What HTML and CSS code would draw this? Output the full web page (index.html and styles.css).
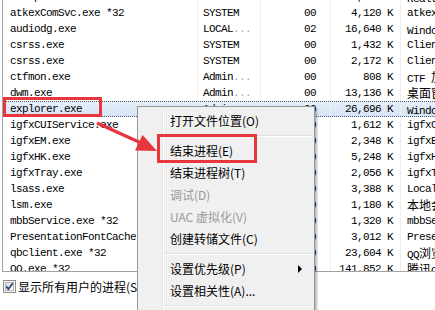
FILE: index.html
```html
<!DOCTYPE html>
<html lang="zh-CN">
<head>
    <meta charset="UTF-8">
    <title>Windows 任务管理器</title>
    <link rel="stylesheet" href="styles.css">
</head>
<body>
    <div class="window">
        <div class="list">
            <div class="row"><div class="name">RAVCpl64.exe</div><div class="user">Admin<span class="dim">...</span></div><div class="cpu">00</div><div class="mem">10,452 K</div><div class="desc">Realtek<span class="cjk">高清晰音频管理器</span></div></div>
            <div class="row"><div class="name">atkexComSvc.exe *32</div><div class="user">SYSTEM</div><div class="cpu">00</div><div class="mem">4,120 K</div><div class="desc">atkexComSvc</div></div>
            <div class="row"><div class="name">audiodg.exe</div><div class="user">LOCAL<span class="dim">...</span></div><div class="cpu">02</div><div class="mem">16,640 K</div><div class="desc">Windows <span class="cjk">音频设备图形隔离</span></div></div>
            <div class="row"><div class="name">csrss.exe</div><div class="user">SYSTEM</div><div class="cpu">00</div><div class="mem">1,432 K</div><div class="desc">Client Server Runtime Process</div></div>
            <div class="row"><div class="name">csrss.exe</div><div class="user">SYSTEM</div><div class="cpu">00</div><div class="mem">2,172 K</div><div class="desc">Client Server Runtime Process</div></div>
            <div class="row"><div class="name">ctfmon.exe</div><div class="user">Admin<span class="dim">...</span></div><div class="cpu">00</div><div class="mem">808 K</div><div class="desc">CTF <span class="cjk">加载程序</span></div></div>
            <div class="row"><div class="name">dwm.exe</div><div class="user">Admin<span class="dim">...</span></div><div class="cpu">00</div><div class="mem">13,136 K</div><div class="desc"><span class="cjk">桌面窗口管理器</span></div></div>
            <div class="row sel"><div class="name">explorer.exe</div><div class="user">Admin<span class="dim">...</span></div><div class="cpu">00</div><div class="mem">26,696 K</div><div class="desc">Windows <span class="cjk">资源管理器</span></div></div>
            <div class="row"><div class="name">igfxCUIService.exe</div><div class="user">SYSTEM</div><div class="cpu">00</div><div class="mem">1,612 K</div><div class="desc">igfxCUIService Module</div></div>
            <div class="row"><div class="name">igfxEM.exe</div><div class="user">Admin<span class="dim">...</span></div><div class="cpu">00</div><div class="mem">2,348 K</div><div class="desc">igfxEM Module</div></div>
            <div class="row"><div class="name">igfxHK.exe</div><div class="user">Admin<span class="dim">...</span></div><div class="cpu">00</div><div class="mem">5,248 K</div><div class="desc">igfxHK Module</div></div>
            <div class="row"><div class="name">igfxTray.exe</div><div class="user">Admin<span class="dim">...</span></div><div class="cpu">00</div><div class="mem">2,056 K</div><div class="desc">igfxTray Module</div></div>
            <div class="row"><div class="name">lsass.exe</div><div class="user">SYSTEM</div><div class="cpu">00</div><div class="mem">3,388 K</div><div class="desc">Local Security Authority Process</div></div>
            <div class="row"><div class="name">lsm.exe</div><div class="user">SYSTEM</div><div class="cpu">00</div><div class="mem">1,180 K</div><div class="desc"><span class="cjk">本地会话管理器服务</span></div></div>
            <div class="row"><div class="name">mbbService.exe *32</div><div class="user">SYSTEM</div><div class="cpu">00</div><div class="mem">1,320 K</div><div class="desc">mbbService</div></div>
            <div class="row"><div class="name">PresentationFontCache.exe</div><div class="user">LOCAL<span class="dim">...</span></div><div class="cpu">00</div><div class="mem">3,012 K</div><div class="desc">PresentationFontCache.exe</div></div>
            <div class="row"><div class="name">qbclient.exe *32</div><div class="user">Admin<span class="dim">...</span></div><div class="cpu">00</div><div class="mem">23,604 K</div><div class="desc">QQ<span class="cjk">浏览器</span></div></div>
            <div class="row"><div class="name">QQ.exe *32</div><div class="user">Admin<span class="dim">...</span></div><div class="cpu">00</div><div class="mem">141,852 K</div><div class="desc"><span class="cjk">腾讯</span>QQ</div></div>
        </div>

        <label class="footer">
            <svg class="check" width="13" height="13" viewBox="0 0 13 13">
                <defs>
                    <linearGradient id="box" x1="0" y1="0" x2="1" y2="1">
                        <stop offset="0" stop-color="#d8d8d8"/>
                        <stop offset="1" stop-color="#ffffff"/>
                    </linearGradient>
                </defs>
                <rect x="0.5" y="0.5" width="12" height="12" fill="#f4f4f4" stroke="#8e8f8f"/>
                <rect x="2.5" y="2.5" width="8" height="8" fill="url(#box)" stroke="#b8b8b8"/>
                <path d="M3.2 6.4 L5.4 9 L9.8 3.2" fill="none" stroke="#2b4a78" stroke-width="1.8"/>
            </svg>
            <span>显示所有用户的进程(S)</span>
        </label>

        <div class="mark mark-explorer"></div>

        <div class="menu">
            <div class="item">打开文件位置(O)</div>
            <div class="sep"></div>
            <div class="item">结束进程(E)</div>
            <div class="item">结束进程树(T)</div>
            <div class="item off">调试(D)</div>
            <div class="item off">UAC 虚拟化(V)</div>
            <div class="item">创建转储文件(C)</div>
            <div class="sep"></div>
            <div class="item sub">设置优先级(P)</div>
            <div class="item">设置相关性(A)...</div>
            <div class="sep"></div>
        </div>

        <div class="mark mark-kill"></div>

        <svg class="arrow" width="435" height="310" viewBox="0 0 435 310">
            <line x1="97" y1="123" x2="140" y2="142.5" stroke="#e8373c" stroke-width="3.5"/>
            <polygon points="157,151 135,150.5 142.5,135" fill="#e8373c"/>
        </svg>
    </div>
</body>
</html>
```

FILE: styles.css
```css
body {
    margin: 0;
    background-color: #fff;
    overflow: hidden;
}
.window {
    position: relative;
    width: 435px;
    height: 310px;
    overflow: hidden;
    font-family: "Liberation Mono", "Noto Sans CJK SC", monospace;
    font-size: 11px;
    color: #000;
}
.list {
    width: 640px;
    height: 282px;
    margin: -11px 0 0 2px;
    border-left: 1px solid #a3a3a3;
    border-bottom: 1px solid #a3a3a3;
    overflow: hidden;
}
.row {
    display: grid;
    grid-template-columns: 194px 63px 70px 70px 240px;
    height: 16px;
    line-height: 16px;
    letter-spacing: -0.6px;
    white-space: nowrap;
}
.row > div {
    overflow: hidden;
}
.row .user, .row .cpu, .row .mem, .row .desc {
    border-left: 1px solid #efefef;
}
.row .name {
    padding-left: 7px;
}
.row .user {
    padding-left: 5px;
}
.row .cpu {
    text-align: right;
    padding-right: 14px;
}
.row .mem {
    text-align: right;
    padding-right: 7px;
}
.row .desc {
    padding-left: 6px;
}
.row.sel {
    background: linear-gradient(#e6eef9, #d6e4f5);
    outline: 1px dotted #4c5b70;
    outline-offset: -1px;
}
.dim {
    color: #a8a8a8;
}
.cjk {
    font-family: "Noto Sans CJK SC", sans-serif;
    font-size: 12px;
    letter-spacing: 0;
}
.footer {
    display: flex;
    align-items: center;
    gap: 2px;
    padding: 6px 0 0 3px;
    font-family: "Noto Sans CJK SC", sans-serif;
    font-size: 12px;
    line-height: 17px;
    white-space: nowrap;
}
.check {
    flex: none;
}
.menu {
    position: absolute;
    left: 137px;
    top: 106px;
    width: 176px;
    height: 215px;
    padding-top: 3px;
    background-color: #f0f0f0;
    border: 1px solid #979797;
    box-shadow: 2px 2px 2px rgba(0, 0, 0, 0.28);
    font-family: "Noto Sans CJK SC", sans-serif;
    font-size: 12px;
}
.menu::before {
    content: '';
    position: absolute;
    left: 24px;
    top: 2px;
    bottom: 0;
    width: 1px;
    background-color: #e2e3e3;
    border-right: 1px solid #fff;
}
.menu .item {
    position: relative;
    height: 22px;
    line-height: 22px;
    padding-left: 32px;
    white-space: nowrap;
}
.menu .item.off {
    color: #9a9a9a;
}
.menu .item.sub::after {
    content: '';
    position: absolute;
    right: 12px;
    top: 7px;
    border-left: 4px solid #000;
    border-top: 4px solid transparent;
    border-bottom: 4px solid transparent;
}
.menu .sep {
    height: 1px;
    margin: 3px 2px 3px 25px;
    background-color: #e0e0e0;
    border-bottom: 1px solid #fff;
}
.mark {
    position: absolute;
    border: 3px solid #e8373c;
}
.mark-explorer {
    left: 3px;
    top: 97px;
    width: 93px;
    height: 14px;
}
.mark-kill {
    left: 157px;
    top: 134px;
    width: 94px;
    height: 23px;
}
.arrow {
    position: absolute;
    left: 0;
    top: 0;
    pointer-events: none;
}
```
